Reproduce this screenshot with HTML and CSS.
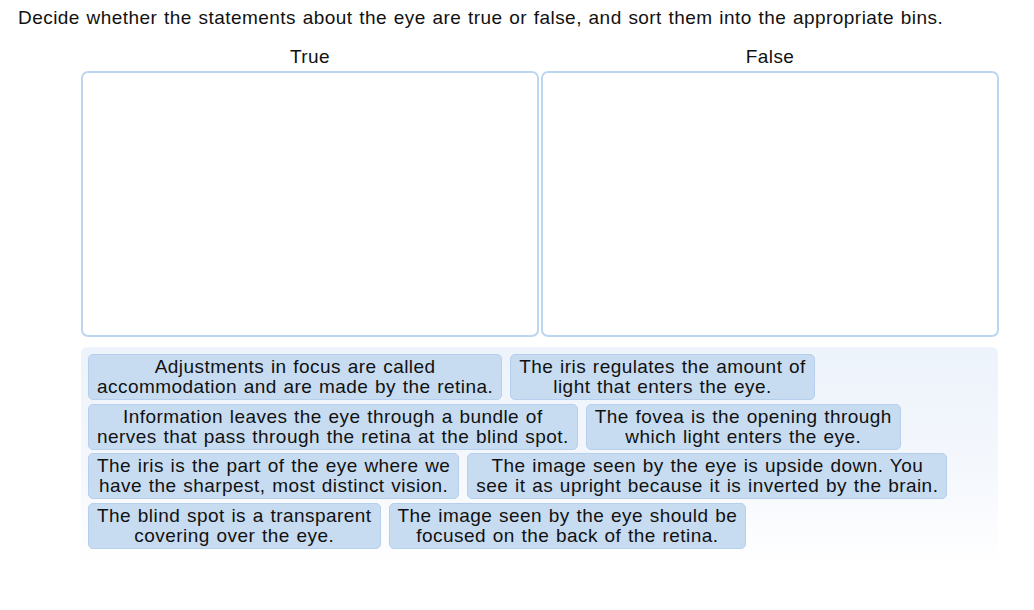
FILE: index.html
```html
<!DOCTYPE html>
<html lang="en">
<head>
<meta charset="utf-8">
<title>Sort statements about the eye</title>
<link rel="stylesheet" href="styles.css">
</head>
<body>
<div class="activity">
  <p class="prompt">Decide whether the statements about the eye are true or false, and sort them into the appropriate bins.</p>

  <div class="bins">
    <div class="bin">
      <div class="bin-label">True</div>
      <div class="bin-drop"></div>
    </div>
    <div class="bin">
      <div class="bin-label">False</div>
      <div class="bin-drop"></div>
    </div>
  </div>

  <div class="pool">
    <div class="card">Adjustments in focus are called<br>accommodation and are made by the retina.</div>
    <div class="card">The iris regulates the amount of<br>light that enters the eye.</div>
    <div class="card">Information leaves the eye through a bundle of<br>nerves that pass through the retina at the blind spot.</div>
    <div class="card">The fovea is the opening through<br>which light enters the eye.</div>
    <div class="card">The iris is the part of the eye where we<br>have the sharpest, most distinct vision.</div>
    <div class="card">The image seen by the eye is upside down. You<br>see it as upright because it is inverted by the brain.</div>
    <div class="card">The blind spot is a transparent<br>covering over the eye.</div>
    <div class="card">The image seen by the eye should be<br>focused on the back of the retina.</div>
  </div>
</div>
</body>
</html>
```

FILE: styles.css
```css
html, body {
  margin: 0;
  padding: 0;
  background: #ffffff;
}

body {
  font-family: "Liberation Sans", Arial, sans-serif;
  color: #111111;
  font-size: 19px;
  letter-spacing: 0.45px;
  word-spacing: 1px;
}

.activity {
  padding: 7px 0 0 18px;
  width: 981px;
}

.prompt {
  margin: 0;
  line-height: 22px;
}

.bins {
  display: flex;
  gap: 2px;
  margin: 17px 0 0 63px;
}

.bin {
  width: 458px;
  display: flex;
  flex-direction: column;
}

.bin-label {
  text-align: center;
  line-height: 22px;
  height: 25px;
}

.bin-drop {
  height: 262px;
  border: 2px solid #bcd6f1;
  border-radius: 7px;
  background: #ffffff;
}

.pool {
  margin: 10px 0 0 63px;
  width: 903px;
  padding: 7px 7px 16px 7px;
  display: flex;
  flex-wrap: wrap;
  column-gap: 8px;
  row-gap: 3.5px;
  align-content: flex-start;
  border-radius: 6px;
  background: linear-gradient(to bottom, #edf3fb 0%, #f5f8fd 60%, #ffffff 100%);
}

.card {
  box-sizing: border-box;
  height: 46px;
  padding: 2px 8px 0 8px;
  border: 1px solid #b6cfec;
  border-radius: 5px;
  background: #c8dcf1;
  text-align: center;
  white-space: nowrap;
  line-height: 20px;
  color: #111111;
}
```
